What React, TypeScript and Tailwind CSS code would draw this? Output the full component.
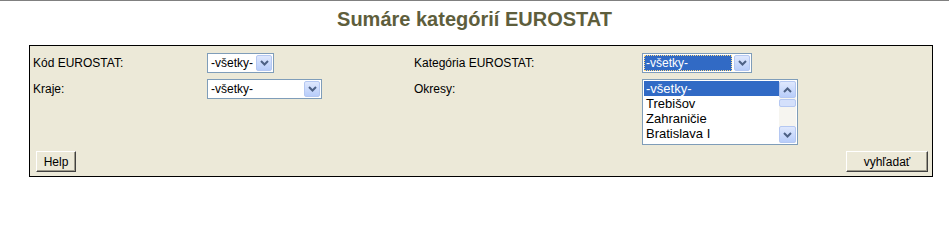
type Opt = { label: string };

function Chevron({ up = false }: { up?: boolean }) {
  return (
    <svg width="9" height="6" viewBox="0 0 9 6" className={up ? "rotate-180" : ""}>
      <path d="M1 1 L4.5 4.5 L8 1" fill="none" stroke="#4d6185" strokeWidth="2" />
    </svg>
  );
}

function ArrowBox({ className = "", up = false }: { className?: string; up?: boolean }) {
  return (
    <div
      className={
        "flex shrink-0 items-center justify-center rounded-[2px] border border-[#b5c8f2] bg-gradient-to-b from-[#dfe8fd] to-[#b8cdfa] " +
        className
      }
    >
      <Chevron up={up} />
    </div>
  );
}

function XpSelect({
  value,
  width,
  focused = false,
}: {
  value: string;
  width: string;
  focused?: boolean;
}) {
  return (
    <div className={"flex h-[20px] items-stretch whitespace-nowrap border border-[#7f9db9] bg-white p-[1px] " + width}>
      <div className="flex min-w-0 flex-1 items-center">
        {focused ? (
          <span className="flex h-full w-full items-center border border-dotted border-[#ffdd88] bg-[#316ac5] pl-[1px] text-white">
            {value}
          </span>
        ) : (
          <span className="pl-[2px]">{value}</span>
        )}
      </div>
      <ArrowBox className="ml-[2px] w-[16px]" />
    </div>
  );
}

function XpList({ items }: { items: Opt[] }) {
  return (
    <div className="flex h-[66px] w-[156px] border border-[#7f9db9] bg-white p-[1px]">
      <div className="flex-1 overflow-hidden whitespace-nowrap text-[13px] leading-[15px]">
        {items.map((it, i) => (
          <div key={it.label} className={i === 0 ? "bg-[#316ac5] pl-[2px] text-white" : "pl-[2px]"}>
            {it.label}
          </div>
        ))}
      </div>
      <div className="flex w-[17px] flex-col bg-[#f6f5f0]">
        <ArrowBox up className="h-[17px]" />
        <div className="mt-[1px] h-[8px] rounded-[2px] border border-[#b5c8f2] bg-[#d4e0fb]" />
        <div className="flex-1" />
        <ArrowBox className="h-[17px]" />
      </div>
    </div>
  );
}

function XpButton({ children, className = "" }: { children: React.ReactNode; className?: string }) {
  return (
    <button
      className={
        "h-[21px] border border-t-white border-l-white border-b-[#404040] border-r-[#404040] bg-[#ece9d8] text-[12px] shadow-[inset_-1px_-1px_0_#9d9a8b] " +
        className
      }
    >
      {children}
    </button>
  );
}

export default function App() {
  const okresy: Opt[] = [
    { label: "-všetky-" },
    { label: "Trebišov" },
    { label: "Zahraničie" },
    { label: "Bratislava I" },
  ];

  return (
    <div className="h-[203px] w-[949px] bg-white font-['Liberation_Sans',Arial,sans-serif] text-[12px] text-black">
      <div className="h-[1px] w-full bg-[#808080]" />
      <h1 className="mt-[6px] text-center text-[20px] font-bold leading-[24px] text-[#5e5e3c]">
        Sumáre kategórií EUROSTAT
      </h1>

      <div className="ml-[29px] mt-[14px] w-[904px] border border-black bg-[#ece9d8] pb-[4px] pl-[3px] pr-[4px] pt-[7px]">
        <div className="grid grid-cols-[174px_207px_228px_1fr] gap-y-[6px]">
          <div className="flex h-[20px] items-center">Kód EUROSTAT:</div>
          <div>
            <XpSelect value="-všetky-" width="w-[67px]" />
          </div>
          <div className="flex h-[20px] items-center">Kategória EUROSTAT:</div>
          <div>
            <XpSelect value="-všetky-" width="w-[110px]" focused />
          </div>

          <div className="flex h-[20px] items-center">Kraje:</div>
          <div>
            <XpSelect value="-všetky-" width="w-[115px]" />
          </div>
          <div className="flex h-[20px] items-center">Okresy:</div>
          <div>
            <XpList items={okresy} />
          </div>
        </div>

        <div className="mt-[6px] flex items-center justify-between pl-[3px]">
          <XpButton className="w-[40px]">Help</XpButton>
          <XpButton className="w-[82px]">vyhľadať</XpButton>
        </div>
      </div>
    </div>
  );
}
